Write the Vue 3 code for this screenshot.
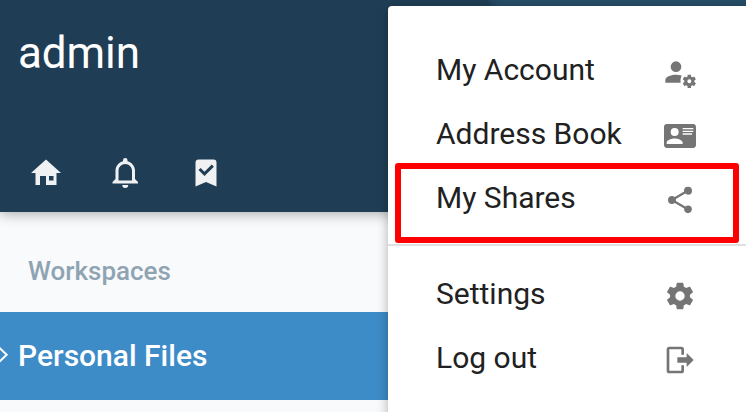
<script setup>
const toolbar = [
  { name: 'Home', path: 'M5,20V12H2L12,3L22,12H19V20H12V14H8V20H5M14,14V17H17V14H14Z' },
  { name: 'Notifications', path: 'M16,17H7V10.5C7,8 9,6 11.5,6C14,6 16,8 16,10.5M18,16V10.5C18,7.43 15.86,4.86 13,4.18V3.5A1.5,1.5 0 0,0 11.5,2A1.5,1.5 0 0,0 10,3.5V4.18C7.13,4.86 5,7.43 5,10.5V16L3,18V19H20V18M11.5,22A2,2 0 0,0 13.5,20H9.5A2,2 0 0,0 11.5,22Z' },
  { name: 'Bookmarks', path: 'M17,3A2,2 0 0,1 19,5V21L12,18L5,21V5C5,3.89 5.9,3 7,3H17M11,14L17.25,7.76L15.84,6.34L11,11.18L8.41,8.59L7,10L11,14Z' },
]

const accountItems = [
  { label: 'My Account', path: 'M9,4A4,4 0 0,0 5,8A4,4 0 0,0 9,12A4,4 0 0,0 13,8A4,4 0 0,0 9,4M9,14C4.58,14 1,15.79 1,18V20H12.5C12.2,18.2 12.5,16.2 13.3,14.6C12,14.2 10.5,14 9,14M18 14C17.87 14 17.76 14.09 17.74 14.21L17.55 15.53C17.25 15.66 16.96 15.82 16.7 16L15.46 15.5C15.35 15.5 15.22 15.5 15.15 15.63L14.15 17.36C14.09 17.47 14.11 17.6 14.21 17.68L15.27 18.5C15.24 18.83 15.24 19.17 15.27 19.5L14.21 20.32C14.12 20.4 14.09 20.53 14.15 20.64L15.15 22.37C15.21 22.5 15.34 22.5 15.46 22.5L16.7 22C16.96 22.18 17.24 22.35 17.55 22.47L17.74 23.79C17.76 23.91 17.86 24 18 24H20C20.11 24 20.22 23.91 20.24 23.79L20.43 22.47C20.73 22.34 21 22.18 21.27 22L22.5 22.5C22.63 22.5 22.76 22.5 22.83 22.37L23.83 20.64C23.89 20.53 23.86 20.4 23.77 20.32L22.7 19.5C22.74 19.17 22.74 18.83 22.7 18.5L23.76 17.68C23.85 17.6 23.88 17.47 23.82 17.36L22.82 15.63C22.76 15.5 22.63 15.5 22.5 15.5L21.27 16C21 15.82 20.73 15.65 20.42 15.53L20.23 14.21C20.22 14.09 20.11 14 20 14H18M19 17.5A1.5 1.5 0 0 1 19 20.5A1.5 1.5 0 0 1 19 17.5Z' },
  { label: 'Address Book', path: 'M2,3H22C23.05,3 24,3.95 24,5V19C24,20.05 23.05,21 22,21H2C0.95,21 0,20.05 0,19V5C0,3.95 .95,3 2,3M14,6V7H22V6H14M14,8V9H22V8H14M14,10V11H21V10H14M8,13.91C6,13.91 2,15 2,17V18H14V17C14,15 10,13.91 8,13.91M8,6A3,3 0 0,0 5,9A3,3 0 0,0 8,12A3,3 0 0,0 11,9A3,3 0 0,0 8,6Z' },
  { label: 'My Shares', highlighted: true, path: 'M18,16.08C17.24,16.08 16.56,16.38 16.04,16.85L8.91,12.7C8.96,12.47 9,12.24 9,12C9,11.76 8.96,11.53 8.91,11.3L15.96,7.19C16.5,7.69 17.21,8 18,8A3,3 0 0,0 21,5A3,3 0 0,0 18,2A3,3 0 0,0 15,5C15,5.24 15.04,5.47 15.09,5.7L8.04,9.81C7.5,9.31 6.79,9 6,9A3,3 0 0,0 3,12A3,3 0 0,0 6,15C6.79,15 7.5,14.69 8.04,14.19L15.16,18.34C15.11,18.55 15.08,18.77 15.08,19C15.08,20.61 16.39,21.91 18,21.91C19.61,21.91 20.92,20.61 20.92,19A2.92,2.92 0 0,0 18,16.08Z' },
]

const sessionItems = [
  { label: 'Settings', path: 'M12,15.5A3.5,3.5 0 0,1 8.5,12A3.5,3.5 0 0,1 12,8.5A3.5,3.5 0 0,1 15.5,12A3.5,3.5 0 0,1 12,15.5M19.43,12.97C19.47,12.65 19.5,12.33 19.5,12C19.5,11.67 19.47,11.34 19.43,11L21.54,9.37C21.73,9.22 21.78,8.95 21.66,8.73L19.66,5.27C19.54,5.05 19.27,4.96 19.05,5.05L16.56,6.05C16.04,5.66 15.5,5.32 14.87,5.07L14.5,2.42C14.46,2.18 14.25,2 14,2H10C9.75,2 9.54,2.18 9.5,2.42L9.13,5.07C8.5,5.32 7.96,5.66 7.44,6.05L4.95,5.05C4.73,4.96 4.46,5.05 4.34,5.27L2.34,8.73C2.21,8.95 2.27,9.22 2.46,9.37L4.57,11C4.53,11.34 4.5,11.67 4.5,12C4.5,12.33 4.53,12.65 4.57,12.97L2.46,14.63C2.27,14.78 2.21,15.05 2.34,15.27L4.34,18.73C4.46,18.95 4.73,19.03 4.95,18.95L7.44,17.94C7.96,18.34 8.5,18.68 9.13,18.93L9.5,21.58C9.54,21.82 9.75,22 10,22H14C14.25,22 14.46,21.82 14.5,21.58L14.87,18.93C15.5,18.67 16.04,18.34 16.56,17.94L19.05,18.95C19.27,19.03 19.54,18.95 19.66,18.73L21.66,15.27C21.78,15.05 21.73,14.78 21.54,14.63L19.43,12.97Z' },
  { label: 'Log out', path: 'M17,17.25V14H10V10H17V6.75L22.25,12L17,17.25M13,2A2,2 0 0,1 15,4V8H13V4H4V20H13V16H15V20A2,2 0 0,1 13,22H4A2,2 0 0,1 2,20V4A2,2 0 0,1 4,2H13Z' },
]
</script>

<template>
  <div class="page">
    <aside class="sidebar">
      <header class="header">
        <div class="user">admin</div>
        <nav class="toolbar">
          <svg v-for="t in toolbar" :key="t.name" class="tool" viewBox="0 0 24 24"><path :d="t.path" /></svg>
        </nav>
      </header>
      <div class="section">Workspaces</div>
      <div class="workspace">
        <svg class="chevron" viewBox="0 0 9 18"><path d="M-1 1.5L6.7 8.8L-1 16.1" /></svg>
        <span>Personal Files</span>
      </div>
    </aside>
    <div class="menu">
      <div v-for="item in accountItems" :key="item.label" class="item">
        <span>{{ item.label }}</span>
        <svg class="icon" viewBox="0 0 24 24"><path :d="item.path" /></svg>
        <div v-if="item.highlighted" class="marker"></div>
      </div>
      <div class="divider"></div>
      <div v-for="item in sessionItems" :key="item.label" class="item">
        <span>{{ item.label }}</span>
        <svg class="icon" viewBox="0 0 24 24"><path :d="item.path" /></svg>
      </div>
    </div>
  </div>
</template>

<style>
body { margin: 0; }
</style>

<style scoped>
.page {
  position: relative;
  width: 746px;
  height: 412px;
  overflow: hidden;
  background: #264e68;
  font-family: Roboto, sans-serif;
}
.sidebar {
  width: 488px;
  height: 412px;
  background: #f9fafc;
  box-shadow: 0 0 8px rgba(0, 0, 0, 0.25);
}
.header {
  box-sizing: border-box;
  height: 212px;
  padding: 25px 0 0 18px;
  background: #1f3e55;
  box-shadow: 0 2px 12px rgba(0, 0, 0, 0.32);
}
.user {
  height: 56px;
  line-height: 56px;
  font-size: 44px;
  letter-spacing: -0.1px;
  color: #fff;
}
.toolbar {
  display: flex;
  gap: 44px;
  padding: 73.5px 0 0 10px;
}
.tool {
  width: 36px;
  height: 36px;
  fill: #eff1f3;
}
.section {
  height: 100px;
  padding: 39px 28px 0;
  box-sizing: border-box;
  line-height: 40px;
  font-size: 26px;
  font-weight: 500;
  color: #8fa4b2;
}
.workspace {
  display: flex;
  align-items: center;
  gap: 9px;
  box-sizing: border-box;
  height: 88px;
  padding-bottom: 2px;
  background: #3d8cc8;
  font-size: 30px;
  font-weight: 500;
  color: #fff;
}
.chevron {
  width: 9px;
  height: 18px;
  fill: none;
  stroke: #fff;
  stroke-width: 2;
}
.menu {
  position: absolute;
  left: 388px;
  top: 6px;
  box-sizing: border-box;
  width: 380px;
  height: 430px;
  padding-top: 34px;
  border-radius: 4px;
  background: #fff;
  box-shadow: 0 2px 12px rgba(0, 0, 0, 0.3);
}
.item {
  position: relative;
  display: flex;
  align-items: center;
  justify-content: space-between;
  box-sizing: border-box;
  height: 64px;
  padding: 0 72px 0 48px;
  font-size: 30px;
  line-height: 60px;
  color: #212121;
}
.item span {
  height: 64px;
}
.icon {
  width: 32px;
  height: 32px;
  fill: #757575;
}
.divider {
  height: 2px;
  margin: 12px 0 18px;
  background: #e0e0e0;
}
.marker {
  position: absolute;
  left: 7px;
  top: -5px;
  box-sizing: border-box;
  width: 344px;
  height: 80px;
  border: 6px solid #f00;
  border-radius: 3px;
}
</style>
